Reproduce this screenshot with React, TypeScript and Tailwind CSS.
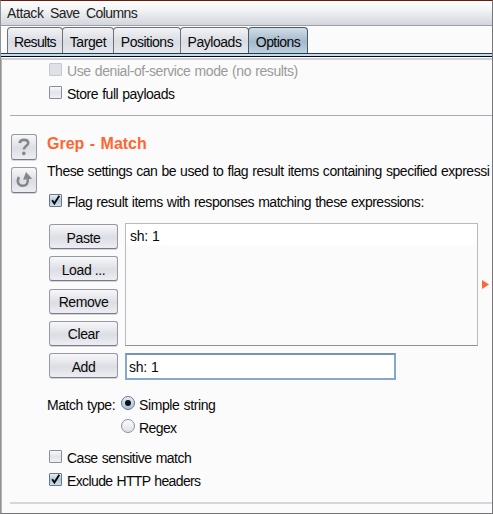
import React from "react";

const raised =
  "border border-[#9699a1] border-b-[#777b84] bg-linear-to-b from-[#f8f8fa] via-[#dcdee4] via-55% to-[#eceef3] shadow-[0_1px_0_#d3d5da]";

function Check({ on = false, disabled = false }: { on?: boolean; disabled?: boolean }) {
  const look = on
    ? "border-[#66788c] bg-linear-to-b from-[#e8f0f7] via-[#b3c7d8] to-[#cfdfea]"
    : disabled
      ? "border-[#c6c8cf] bg-[#dfe1e6]"
      : "border-[#8b8e98] bg-linear-to-b from-[#f8f8fa] via-[#e2e4e9] to-[#f0f1f5]";
  return (
    <span className={`block size-[13px] shrink-0 rounded-[1px] border ${look}`}>
      {on && (
        <svg viewBox="0 0 13 13" className="-mt-px -ml-px size-[13px] overflow-visible" fill="none">
          <path d="M3.2 6.3 5.4 9.6 10.3 1.8" stroke="#080808" strokeWidth="1.9" />
        </svg>
      )}
    </span>
  );
}

function Option({
  children,
  on,
  disabled,
  className,
}: {
  children: React.ReactNode;
  on?: boolean;
  disabled?: boolean;
  className: string;
}) {
  return (
    <label className={`flex h-[13px] items-center gap-[5px] ${className} ${disabled ? "text-[#9a9a9a]" : ""}`}>
      <Check on={on} disabled={disabled} />
      <span className="pt-[2px]">{children}</span>
    </label>
  );
}

function Radio({ on = false }: { on?: boolean }) {
  return (
    <span
      className={`flex size-[14px] items-center justify-center rounded-full border ${
        on
          ? "border-[#66788c] bg-linear-to-b from-[#e5edf5] to-[#abc1d3]"
          : "border-[#8b8e98] bg-linear-to-b from-[#fafafb] to-[#dfe1e6]"
      }`}
    >
      {on && <span className="size-[6px] rounded-full bg-[#0c1014]" />}
    </span>
  );
}

function Tab({ children, className, active = false }: { children: string; className: string; active?: boolean }) {
  return (
    <div
      className={`flex h-[26px] items-center justify-center rounded-t-[4px] border border-b-0 pt-[2px] ${className} ${
        active
          ? "border-[#47596b] bg-linear-to-b from-[#d1dde7] via-[#a4b9cb] via-55% to-[#bdd1e1]"
          : "-mr-px border-[#6c7178] bg-linear-to-b from-[#f2f3f5] via-[#d9dce3] via-55% to-[#e5e8ed]"
      }`}
    >
      {children}
    </div>
  );
}

const actions = ["Paste", "Load ...", "Remove", "Clear", "Add"];

export default function App() {
  return (
    <div className="flex h-[514px] w-[493px] flex-col overflow-hidden border border-t-[#6d1c0c] border-r-[#77777b] border-b-[#747477] border-l-[#929296] bg-[#fbfbfb] font-['Liberation_Sans',Arial,sans-serif] text-[14px] leading-[16px] tracking-[-0.5px] whitespace-nowrap text-[#080808] [word-spacing:0.7px]">
      <nav className="flex h-[25px] shrink-0 items-center gap-[7px] border-b border-[#9b9da4] bg-linear-to-b from-white via-[#f3f4f5] via-35% to-[#d2d5dd] pl-[6px] text-[#222]">
        <span className="w-[36px] tracking-[-0.4px]">Attack</span>
        <span className="w-[29px] tracking-[-0.6px]">Save</span>
        <span className="tracking-[-0.6px]">Columns</span>
      </nav>
      <div className="flex h-[27px] shrink-0 items-end pl-[6px]">
        <Tab className="w-[56px] tracking-[-0.7px]">Results</Tab>
        <Tab className="w-[52px] tracking-[-0.4px]">Target</Tab>
        <Tab className="w-[68px] tracking-[-0.5px]">Positions</Tab>
        <Tab className="w-[69px] tracking-[-0.45px]">Payloads</Tab>
        <Tab className="w-[60px] tracking-[-0.55px]" active>
          Options
        </Tab>
      </div>
      <div className="h-[4px] shrink-0 border-y border-t-[#263b4e] border-b-[#060a18] bg-[#c5dceb]" />
      <div className="mt-px flex grow flex-col overflow-hidden border-t-2 border-l border-t-[#d0cfd7] border-l-[#b4b4b8]">
        <div className="ml-[47px]">
          <Option disabled className="mt-[3px] tracking-[-0.42px]">
            Use denial-of-service mode (no results)
          </Option>
          <Option className="mt-[10px] tracking-[-0.48px]">Store full payloads</Option>
        </div>
        <div className="mt-[15px] ml-[8px] h-[2px] shrink-0 border-b border-[#a9acb3]" />

        <section className="flex h-[386px] shrink-0">
          <aside className="ml-[9px] flex w-[27px] shrink-0 flex-col gap-[7px] pt-[18px]">
            <button className={`flex size-[26px] items-center justify-center rounded-[3px] ${raised}`}>
              <svg viewBox="0 0 26 26" className="size-[26px] shrink-0" fill="none">
                <path d="M8.7 9.2C8.9 6.7 10.7 5.8 12.9 5.8c2.5 0 4.3 1.1 4.3 3.1 0 3-4.3 3.3-4.3 6.7" stroke="#85888b" strokeWidth="2.7" />
                <circle cx="12.8" cy="19.4" r="1.8" fill="#85888b" />
              </svg>
            </button>
            <button className={`flex size-[26px] items-center justify-center rounded-[3px] ${raised}`}>
              <svg viewBox="0 0 26 26" className="size-[26px] shrink-0" fill="none">
                <path d="M8 10C5.3 14.5 7.4 18.6 11.5 18.7c4.4.1 6.1-3.1 5-8.2" stroke="#85888b" strokeWidth="2.5" />
                <path d="m15 5 6.2 6.7-9.1 1z" fill="#85888b" />
              </svg>
            </button>
          </aside>

          <div className="ml-[9px] flex min-w-0 grow flex-col pt-[19px]">
            <h2 className="text-[16px] leading-[18px] font-bold tracking-[0px] text-[#ff6633] [word-spacing:1px]">
              Grep - Match
            </h2>
            <p className="mt-[10px] tracking-[-0.48px]">These settings can be used to flag result items containing specified expressi</p>
            <div className="ml-[2px]">
              <Option on className="mt-[15px] tracking-[-0.49px]">
                Flag result items with responses matching these expressions:
              </Option>
            </div>
            <div className="mt-[16px] ml-[2px] flex gap-[7px]">
              <div className="flex w-[69px] flex-col gap-[7.3px] pt-px">
                {actions.map((name) => (
                  <button
                    key={name}
                    className={`h-[25px] shrink-0 rounded-[3px] pt-[2px] tracking-[-0.4px] ${raised}`}
                  >
                    {name}
                  </button>
                ))}
              </div>
              <div className="flex flex-col gap-[7px]">
                <div className="h-[123px] w-[353px] border border-[#b8bac3] border-b-[#8b929b]">
                  <div className="h-[21px] bg-white pt-[4px] pl-[4px] tracking-[-0.3px]">sh: 1</div>
                </div>
                <div className="h-[27px] w-[271px] border-2 border-[#86a9cb] border-t-[#7794b2] bg-white pt-[4px] pl-[2px] tracking-[-0.3px]">
                  sh: 1
                </div>
              </div>
              <div className="-ml-[3px] flex items-start pt-[57px]">
                <svg viewBox="0 0 7 9" className="h-[9px] w-[7px]">
                  <path d="M0 0 7 4.5 0 9z" fill="#ff6633" />
                </svg>
              </div>
            </div>
            <div className="mt-[16px] flex">
              <span className="w-[74px] pt-px tracking-[-0.45px]">Match type:</span>
              <div className="flex flex-col gap-[9px]">
                <label className="flex h-[14px] items-center gap-[4px]">
                  <Radio on />
                  <span className="pt-[3px] tracking-[-0.4px]">Simple string</span>
                </label>
                <label className="flex h-[14px] items-center gap-[4px]">
                  <Radio />
                  <span className="pt-[3px] tracking-[-0.6px]">Regex</span>
                </label>
              </div>
            </div>
            <div className="ml-[2px]">
              <Option className="mt-[17px] tracking-[-0.51px]">Case sensitive match</Option>
              <Option on className="mt-[10px] tracking-[-0.62px]">
                Exclude HTTP headers
              </Option>
            </div>
          </div>
        </section>
        <div className="ml-[8px] h-[2px] shrink-0 bg-[#d5d7df]" />
      </div>
    </div>
  );
}
